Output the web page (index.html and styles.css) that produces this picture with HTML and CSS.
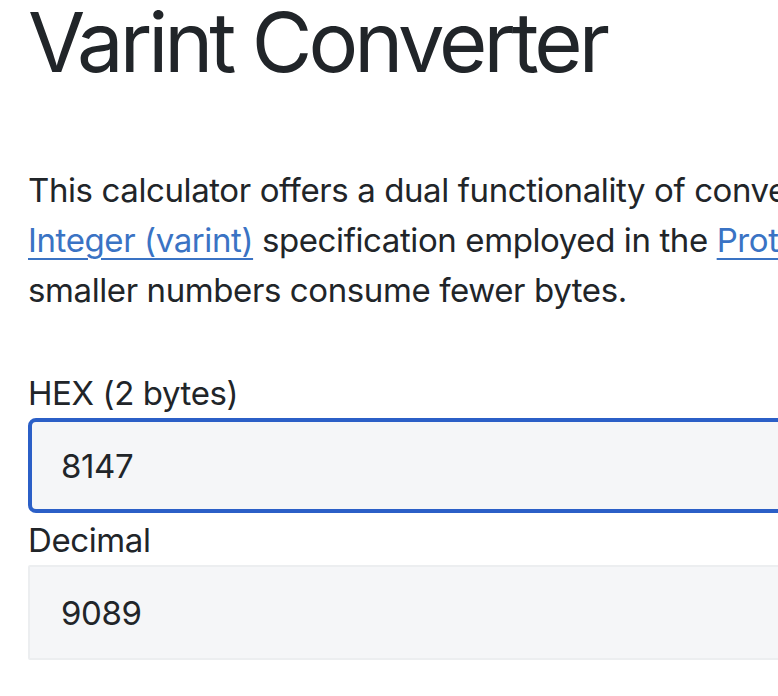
FILE: index.html
```html
<!DOCTYPE html>
<html lang="en">
<head>
<meta charset="utf-8">
<title>Varint Converter</title>
<link rel="stylesheet" href="styles.css">
</head>
<body>
<main class="page">
  <h1 class="title">Varint Converter</h1>
  <p class="intro">This calculator offers a dual functionality of converting hexadecimal values to decimal<br><a href="#">Integer (varint)</a> specification employed in the <a href="#">Protocol Buffers</a> encoding format, where<br>smaller numbers consume fewer bytes.</p>
  <form class="form">
    <label class="label" for="hex">HEX (2 bytes)</label>
    <input class="field field-active" id="hex" type="text" value="8147">
    <label class="label" for="dec">Decimal</label>
    <input class="field" id="dec" type="text" value="9089">
  </form>
</main>
</body>
</html>
```

FILE: styles.css
```css
html, body {
  margin: 0;
  padding: 0;
  overflow: hidden;
  background: #ffffff;
}
body {
  font-family: Inter, "Noto Sans", sans-serif;
  color: #212529;
}
.page {
  width: 1400px;
  padding-left: 28px;
}
.title {
  margin: 0 0 80px;
  font-size: 83px;
  font-weight: 400;
  line-height: 85px;
  letter-spacing: -4px;
}
.intro {
  margin: 0 0 53px;
  font-size: 33px;
  line-height: 50px;
  letter-spacing: -0.4px;
  white-space: nowrap;
}
.intro a {
  color: #3a73c4;
  text-decoration: underline;
  text-underline-offset: 6px;
  text-decoration-thickness: 2px;
}
.form {
  display: flex;
  flex-direction: column;
  width: 1300px;
}
.label {
  font-size: 33px;
  line-height: 50px;
  letter-spacing: -0.4px;
}
.field {
  box-sizing: border-box;
  height: 95px;
  margin: 0 0 2px;
  padding: 0 0 0 31px;
  border: 2px solid #eceef0;
  border-radius: 2px;
  background: #f5f6f8;
  font-family: Inter, "Noto Sans", sans-serif;
  font-size: 33px;
  letter-spacing: -0.4px;
  color: #212529;
  outline: none;
}
.field-active {
  border: 4px solid #2b5fc7;
  border-radius: 8px;
  padding-left: 29px;
}
```
